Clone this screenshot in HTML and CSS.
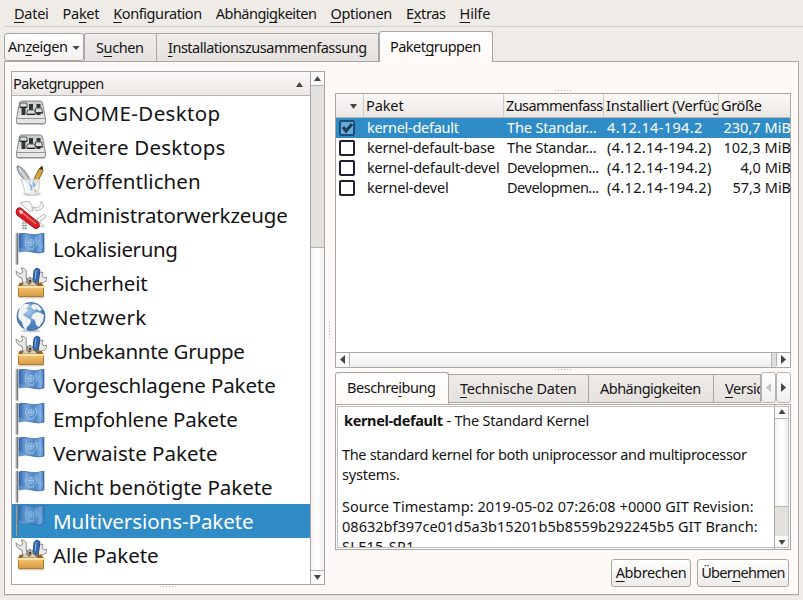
FILE: index.html
```html
<!DOCTYPE html>
<html lang="de"><head><meta charset="utf-8"><title>Paketgruppen</title><link rel="stylesheet" href="styles.css"></head>
<body>
<svg class="defs" aria-hidden="true">
<defs>
<linearGradient id="wood" x2="0" y2="1"><stop offset="0" stop-color="#f8c87c"/><stop offset="1" stop-color="#d59a40"/></linearGradient>
<linearGradient id="metal" x2="0" y2="1"><stop offset="0" stop-color="#c9cbc7"/><stop offset="1" stop-color="#f4f4f2"/></linearGradient>
<linearGradient id="cloth" x2="1" y2="0"><stop offset="0" stop-color="#2f67ae"/><stop offset=".3" stop-color="#78a6d8"/><stop offset=".65" stop-color="#4a83c4"/><stop offset=".85" stop-color="#7fade0"/><stop offset="1" stop-color="#3a71b4"/></linearGradient>
<radialGradient id="sea" cx=".4" cy=".3"><stop offset="0" stop-color="#a6c9ec"/><stop offset="1" stop-color="#4a80bd"/></radialGradient>
</defs>
<symbol id="desk" viewBox="0 0 32 32"><path d="M6.500 4h19q1.500 0 2 2l3 16v3q0 2-2 2H3.500q-2 0-2-2v-3L4.500 6q.5-2 2-2z" fill="url(#metal)" stroke="#858782"/><path d="M1.500 21.500h29v3q0 2-1.500 2H3q-1.500 0-1.500-2z" fill="#e5e6e3" stroke="#92948f"/><path d="M8.500 7v11M16 7v11M23.500 7v11" stroke="#333735" stroke-width="4"/><path d="M5.500 6h6l1 4h-8zM12.500 13h7l1 4h-9zM20.500 11h6l1 4.500h-7z" fill="#dcdedb" stroke="#555a57"/><path d="M5 10.500h7M12 17.500h8M21 16h7" stroke="#222"/></symbol>
<symbol id="pens" viewBox="0 0 32 32"><ellipse cx="17" cy="29" rx="9" ry="2" fill="#ccc"/><path d="M15 19C8 14 2 8 2 1c6 1 10 7 14 16" fill="#b9bec0" stroke="#777d80"/><path d="m4 3 11 16" stroke="#eee"/><path d="m17 18 7-14 3-3 1 5-7 14z" fill="#dda23b" stroke="#916021"/><path d="m24 4 3-3 1 4z" fill="#333"/><path d="m6 14 19 .5L23 29q-6 3-12 0z" fill="#edf1f4" fill-opacity=".8" stroke="#c7cbce"/><path d="m14 17 5 6-3 3zM18 16l-1 10 4-6z" fill="#91b9de"/><path d="m19 24 3 2-2 2z" fill="#e4a27b"/><path d="m9 16 3 12" stroke="#fff" stroke-width="1.500"/></symbol>
<symbol id="knife" viewBox="0 0 32 32"><path d="M14 12 5 4q6-3 10-1 2 2 3 9zM22 20l7-5q3 2 1 4-2 2-4 2l-2 4zM18 8l5 1q4-3 3-7 4 4 1 8l-6 2zM24 23l5 4q-4 2-7 0zM8 19v11h3V21z" fill="#f7f7f7" stroke="#aaa" stroke-width=".8"/><path d="M7 24h5M7 26.500h5M7 29h5" stroke="#999"/><path d="M2 10q2-3 5 0l16 13q3 4 0 6-2 2-5-1L2 16q-2-3 0-6z" fill="#db1e25" stroke="#a8171c"/><path d="m4 11 17 14" stroke="#f47b7b" stroke-width="1.500"/><path d="M6 11v4M4 13h4" stroke="#fff"/></symbol>
<symbol id="flag" viewBox="0 0 32 32"><path d="M2 0v31.500" stroke="#737775" stroke-width="2.500"/><path d="M1.500 0v31" stroke="#a7aaa8"/><path d="M4 1q4-2 9 0 8 2 16-1v19q-5 2-12 0-7-2-13 0z" fill="url(#cloth)" stroke="#315f9b" stroke-width=".7"/><path d="m4 14 11 5H4zM20 1l8 10v6l-9-9z" fill="#9cc3ec" opacity=".3"/><g fill="none" stroke="#a5c8e9" stroke-width=".9"><circle cx="16" cy="9.500" r="3"/><path d="M12 5q-4 6 2 10M20 5q4 6-2 10M16 7v5M13 9.500h6M13 16h6"/></g></symbol>
<symbol id="tools" viewBox="0 0 32 32"><path d="m8 18-1-7Q1 10 1 4l4 3 3-2-2-4q7 0 5 8l2 9zM20 18l3-7q-1-5 5-6l-1 4 2 2 3-1q0 6-6 6l-3 3z" fill="#e9ebe9" stroke="#8a8e8a"/><path d="m18 15 1-11q2-5 6-1l-2 14z" fill="#3569b0" stroke="#244b84"/><path d="m21 3-1 9" stroke="#91b5e4"/><circle cx="15" cy="14" r="3.500" fill="#aaaead" stroke="#555a57" stroke-dasharray="2 1"/><circle cx="15" cy="14" r="1.300" fill="#444"/><path d="m5 16-2 4h26l-3-4z" fill="#7f5a2b" stroke="#a87531"/><path d="m7 19 3-5 4 4 4-3 5 4z" fill="#d0d2cf"/><path d="M3.500 19h25v10.500h-25z" fill="url(#wood)" stroke="#b57a28"/><path d="M2 20h28" stroke="#ffe0a7" stroke-width="2"/><path d="M4 30.800h25" stroke="#bbb"/></symbol>
<symbol id="globe" viewBox="0 0 32 32"><ellipse cx="16" cy="30" rx="10" ry="1.500" fill="#ccc"/><circle cx="16" cy="15.500" r="14" fill="url(#sea)" stroke="#4473a9"/><path d="m5 6 4-3 5 0-1 3-2 1 2 2-3 3-2 2 3 2 5 3-1 4-3 3-1 4-3-5-1-4-3-3-1-4zM18 3l5 1 4 5-3 1-2-2-3 1-3-3zM18 13l4-2 4 1 3 2-1 6-4 6-3-2-1-5-4-2z" fill="#f0f3f2"/><path d="M5 10q10-9 22-2" fill="none" stroke="#fff" opacity=".45"/></symbol>
</svg>

<nav class="menubar"><span data-w="34"><u>D</u>atei</span><span data-w="36">Pa<u>k</u>et</span><span data-w="88"><u>K</u>onfiguration</span><span data-w="100">Abhängi<u>g</u>keiten</span><span data-w="61"><u>O</u>ptionen</span><span data-w="39">E<u>x</u>tras</span><span data-w="30"><u>H</u>ilfe</span></nav>
<div class="tabs main-tabs"><div class="show"><span data-w="59">An<u>z</u>eigen</span><i class="tri down small"></i></div><div class="tab search"><span data-w="47">S<u>u</u>chen</span></div><div class="tab summary"><span data-w="198"><u>I</u>nstallationszusammenfassung</span></div><div class="tab active groups-tab"><span data-w="90">Paket<u>g</u>ruppen</span></div></div>
<main class="panel">
<section class="left">
<div class="tree"><div class="list"><header><span data-w="90">Paketgruppen</span><i class="tri up"></i></header>
<ul>
<li><svg><use href="#desk"/></svg><span data-w="167">GNOME-Desktop</span></li>
<li><svg><use href="#desk"/></svg><span data-w="172">Weitere Desktops</span></li>
<li><svg><use href="#pens"/></svg><span data-w="147">Veröffentlichen</span></li>
<li><svg><use href="#knife"/></svg><span data-w="234">Administratorwerkzeuge</span></li>
<li><svg><use href="#flag"/></svg><span data-w="124">Lokalisierung</span></li>
<li><svg><use href="#tools"/></svg><span data-w="94">Sicherheit</span></li>
<li><svg><use href="#globe"/></svg><span data-w="93">Netzwerk</span></li>
<li><svg><use href="#tools"/></svg><span data-w="191">Unbekannte Gruppe</span></li>
<li><svg><use href="#flag"/></svg><span data-w="222">Vorgeschlagene Pakete</span></li>
<li><svg><use href="#flag"/></svg><span data-w="184">Empfohlene Pakete</span></li>
<li><svg><use href="#flag"/></svg><span data-w="164">Verwaiste Pakete</span></li>
<li><svg><use href="#flag"/></svg><span data-w="219">Nicht benötigte Pakete</span></li>
<li class="selected"><svg><use href="#flag"/></svg><span data-w="200">Multiversions-Pakete</span></li>
<li><svg><use href="#tools"/></svg><span data-w="105">Alle Pakete</span></li>
</ul></div>
<div class="vbar"><b><i class="tri up"></i></b><div class="gap"></div><div class="thumb"></div><b><i class="tri down"></i></b></div></div>
<div class="grip"></div>
</section>
<div class="splitter"></div>
<section class="right">
<div class="grip"></div>
<div class="packages">
<div class="row head"><div class="c0"><i class="tri down"></i></div><div><span data-w="37">Paket</span></div><div><span data-w="96">Zusammenfass</span></div><div><span data-w="114">Installiert (Verfüg</span></div><div><span data-w="40">Größe</span></div></div>
<div class="row selected"><div class="c0"><svg class="check" viewBox="0 0 16 16"><rect x="1" y="1" width="14" height="14" rx="1"/><path d="m4 7 3 4 6-7"/></svg></div><div><span data-w="91">kernel-default</span></div><div><span data-w="89">The Standar...</span></div><div><span data-w="95">4.12.14-194.2</span></div><div class="size"><span data-w="67">230,7 MiB</span></div></div>
<div class="row"><div class="c0"><svg class="check" viewBox="0 0 16 16"><rect x="1" y="1" width="14" height="14" rx="1"/></svg></div><div><span data-w="127">kernel-default-base</span></div><div><span data-w="89">The Standar...</span></div><div><span data-w="104">(4.12.14-194.2)</span></div><div class="size"><span data-w="67">102,3 MiB</span></div></div>
<div class="row"><div class="c0"><svg class="check" viewBox="0 0 16 16"><rect x="1" y="1" width="14" height="14" rx="1"/></svg></div><div><span data-w="132">kernel-default-devel</span></div><div><span data-w="91">Developmen...</span></div><div><span data-w="104">(4.12.14-194.2)</span></div><div class="size"><span data-w="50">4,0 MiB</span></div></div>
<div class="row"><div class="c0"><svg class="check" viewBox="0 0 16 16"><rect x="1" y="1" width="14" height="14" rx="1"/></svg></div><div><span data-w="81">kernel-devel</span></div><div><span data-w="91">Developmen...</span></div><div><span data-w="104">(4.12.14-194.2)</span></div><div class="size"><span data-w="58">57,3 MiB</span></div></div>
<div class="hbar"><b><i class="tri lft"></i></b><div class="thumb"></div><div class="gap"></div><b><i class="tri rgt"></i></b></div>
</div>
<div class="grip low"></div>
<div class="tabs detail-tabs"><div class="tab active d1"><span data-w="88">Beschre<u>i</u>bung</span></div><div class="tab d2"><span data-w="116"><u>T</u>echnische Daten</span></div><div class="tab d3"><span data-w="100">Abhängigkeiten</span></div><div class="tab d4"><span data-w="64"><u>V</u>ersionen</span></div><div class="nav off"><i class="tri lft"></i></div><div class="nav"><i class="tri rgt"></i></div></div>
<div class="frame"><div class="text">
<p class="title"><span data-w="98"><strong>kernel-default</strong></span> <span data-w="142">- The Standard Kernel</span></p>
<p><span data-w="404">The standard kernel for both uniprocessor and multiprocessor</span><br><span data-w="57">systems.</span></p>
<p><span data-w="411">Source Timestamp: 2019-05-02 07:26:08 +0000 GIT Revision:</span><br><span data-w="415">08632bf397ce01d5a3b15201b5b8559b292245b5 GIT Branch:</span><br><span data-w="72">SLE15-SP1</span></p>
</div><div class="vbar"><b><i class="tri up"></i></b><div class="thumb"></div><div class="gap"></div><b><i class="tri down"></i></b></div></div>
<footer><button><span data-w="70"><u>A</u>bbrechen</span></button><button class="ok"><span data-w="83">Über<u>n</u>ehmen</span></button></footer>
</section>
</main>
<script src="fit.js"></script>
</body></html>
```
FILE: styles.css
```css
*{box-sizing:border-box}
body{margin:0;width:803px;height:600px;overflow:hidden;background:#efebe7;color:#141414;font:14.5px/20px "Noto Sans",sans-serif;white-space:nowrap;display:flex;flex-direction:column}
.defs{position:absolute;width:0;height:0}
span{display:inline-block;flex:none}
u{text-decoration-thickness:1px;text-underline-offset:3px;text-decoration-skip-ink:none}
i,b{display:block;flex:none}
.tri{width:7px;height:5px;background:#464646;clip-path:polygon(50% 0,100% 100%,0 100%)}
.tri.down{clip-path:polygon(0 0,100% 0,50% 100%)}
.tri.lft,.tri.rgt{width:5px;height:9px}
.tri.lft{clip-path:polygon(100% 0,100% 100%,0 50%)}
.tri.rgt{clip-path:polygon(0 0,100% 50%,0 100%)}
.menubar{height:27px;margin-left:4px;padding:3px 0 0 10px;border-bottom:1px solid #d2cfcc;display:flex;gap:14px}
.tabs{display:flex;align-items:flex-end;position:relative;z-index:1}
.main-tabs{height:35px;margin-left:4px}
.show{height:28px;width:80px;border:1px solid #aaa6a3;border-radius:3px;background:linear-gradient(#fff,#f3f0ee);padding:2px 0 0 3px;display:flex;margin-bottom:1px}
.show .tri{margin:10px 0 0 5px;height:4px}
.tab{height:29px;border:1px solid #aaa6a3;border-left:0;background:linear-gradient(#eeebe8,#e5e1de);padding-top:3px;overflow:hidden;flex:none}
.search{width:73px;padding-left:11px;border-left:1px solid #aaa6a3}
.summary{width:222px;padding-left:11px}
.groups-tab{width:114px;padding-left:10px}
.tab.active{height:31px;border:1px solid #aaa6a3;border-bottom:0;border-radius:3px 3px 0 0;background:linear-gradient(#fff,#fdf9f6);padding-top:4px}
.panel{width:795px;height:534px;margin:-1px 0 0 4px;border:1px solid #aaa6a3;box-shadow:0 1px #dedad7;background:#fdf9f6;display:flex;padding:9px 7px 0 6px}
.left{width:314px}
.tree{display:flex;height:514px;border:1px solid #aaa6a3}
.list{width:298px;background:#fff;overflow:hidden;flex:none}
.list header{height:24px;padding:1px 7px 0 1px;display:flex;justify-content:space-between;background:linear-gradient(#fbf9f7,#ebe7e4);border-bottom:1px solid #b9b5b2}
header .tri{margin-top:9px}
ul{margin:0;padding:0;list-style:none}
li{height:34px;display:flex;font-size:20.5px;line-height:34px;padding-left:3px}
li svg{width:32px;height:32px;flex:none;margin:1px 6px 0 0}
.selected{background:#308cc6;color:#fff}
li.selected svg{opacity:.8}
.vbar{width:14px;flex:none;border-left:1px solid #aaa6a3;display:flex;flex-direction:column;background:#e3e1de}
.vbar b,.hbar b{background:#fbfaf8;display:flex;align-items:center;justify-content:center;height:13px}
.vbar .thumb{border:solid #b5b2af;border-width:1px 0;background:linear-gradient(90deg,#f4f2f1,#fff,#eeeceb)}
.tree .gap{height:162px;border-top:1px solid #b5b2af}
.tree .thumb{flex:1}
.grip{width:16px;height:1px;margin:2px auto 0;background:repeating-linear-gradient(90deg,#b5b1ae 0 1px,transparent 1px 3px)}
.left .grip{margin-top:1px}
.splitter{width:1px;height:16px;margin:251px 5px 0 4px;background:repeating-linear-gradient(#b5b1ae 0 1px,transparent 1px 3px)}
.right{width:456px;padding-top:17px}
.packages{height:275px;margin-top:2px;border:1px solid #aaa6a3;background:#fff;display:flex;flex-direction:column}
.row{height:20px;display:grid;grid-template-columns:28px 140px 100px 115px 71px;flex:none}
.row>div{overflow:hidden;padding-left:3px;line-height:18px}
.row>.size{display:flex;justify-content:flex-end;padding:0;margin-right:-1px}
.head{height:24px;background:linear-gradient(#fbf9f7,#ebe7e4);border-bottom:1px solid #b9b5b2}
.head>div{padding:2px 0 0 2px;border-right:1px solid #ccc8c5}
.head>div:not(.c0){padding-left:2px}
.head>div:last-child{border:0}
.head .tri{margin:8px 0 0 11px}
.row>.c0{padding-left:3px}
.check{display:block;width:16px;height:16px;margin-top:2px;fill:#fff;stroke:#202033;stroke-width:2}
.selected .check{fill:#65acd9;stroke:#1d4e77}
.selected .check path{fill:none;stroke:#203d59;stroke-width:3}
.hbar{height:15px;margin-top:auto;border-top:1px solid #aaa6a3;display:flex}
.hbar b{width:14px;height:13px;border-right:1px solid #b5b2af}
.hbar b:last-child{border-right:0;border-left:1px solid #b5b2af}
.hbar .thumb{flex:1;background:linear-gradient(#fff,#f0eeec)}
.hbar .gap{width:5px;background:#e0dedb;border-left:1px solid #b5b2af}
.low{margin-top:1px}
.detail-tabs{height:32px;margin-top:2px;align-items:flex-start;width:456px}
.detail-tabs .tab{margin-top:2px}
.detail-tabs .active{margin-top:0;height:32px}
.d1{width:114px;padding-left:11px}.d2{width:140px;padding-left:11px}.d3{width:125px;padding-left:11px}.d4{width:47px;padding-left:11px}
.nav{width:15px;height:31px;border:1px solid #b5b2af;border-radius:3px;background:linear-gradient(#fff,#f0eeec);display:flex;align-items:center;justify-content:center}
.off .tri{background:#c5c2bf}
.frame{height:146px;border:1px solid #aaa6a3;outline:1px solid #c0bcb9;outline-offset:-3px;background:#fff;display:flex;justify-content:space-between;overflow:hidden;padding-right:1px}
.text{padding:5px 0 0 6px;overflow:hidden;height:142px}
.text p{margin:0 0 12px}
.text .title{margin:0 0 14px 2px}
.frame .vbar{width:15px}
.frame .thumb{height:89px}
.frame .gap{flex:1}
footer{display:flex;justify-content:flex-end;gap:6px;margin:9px 2px 0 0}
button{font:inherit;color:inherit;width:80px;height:28px;padding:0 0 2px;border:1px solid #aaa6a3;border-radius:3px;background:linear-gradient(#fff,#eeebe8)}
.ok{width:92px}
```
FILE: fit.js
```js
// Track each label so it fills its measured width in pixels.
document.querySelectorAll('[data-w]').forEach(el => {
  const n = el.textContent.length;
  const extra = (Number(el.dataset.w) + 0.6 - el.getBoundingClientRect().width) / n;
  el.style.letterSpacing = extra.toFixed(3) + 'px';
});
```
